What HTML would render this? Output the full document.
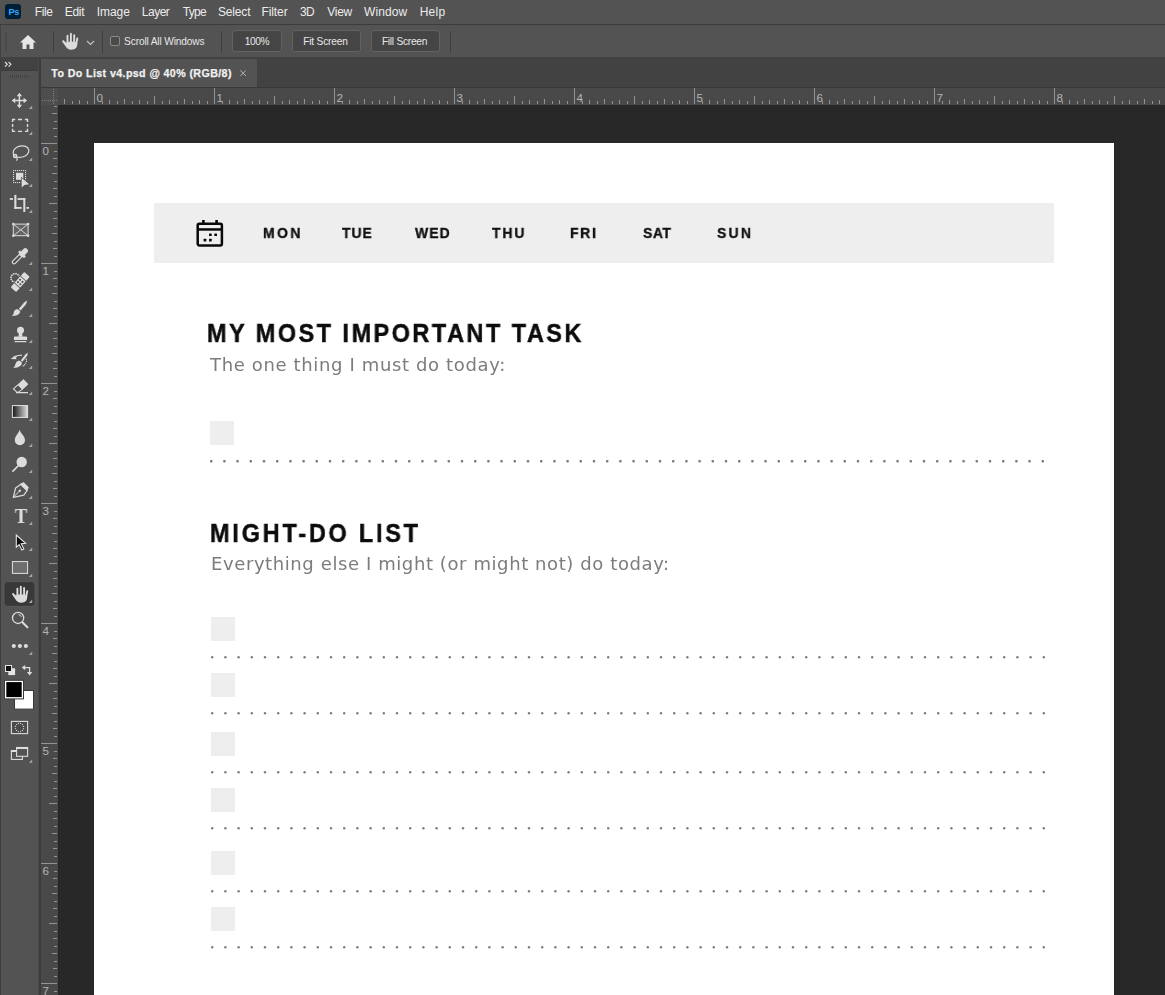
<!DOCTYPE html>
<html><head><meta charset="utf-8"><title>To Do List v4.psd</title>
<style>
html,body{margin:0;padding:0;}
body{width:1165px;height:995px;overflow:hidden;background:#282828;position:relative;font-family:"Liberation Sans",sans-serif;color:#e6e6e6;}
.abs{position:absolute;}
#menubar{left:0;top:0;width:1165px;height:24px;background:#535353;}
#menuline{left:0;top:24px;width:1165px;height:1px;background:#3c3c3c;}
#optbar{left:0;top:25px;width:1165px;height:33px;background:#535353;}
#optline{left:0;top:57px;width:1165px;height:2px;background:#424242;}
.menu{position:absolute;top:4px;font-size:13.3px;line-height:16px;color:#ececec;white-space:nowrap;}
#tabstrip{left:39px;top:59px;width:1126px;height:29px;background:#424242;}
#tab{left:41px;top:59px;width:216px;height:28px;background:#535353;}
#tabtxt{left:51px;top:66px;font-size:11.6px;font-weight:bold;line-height:14px;color:#f0f0f0;white-space:nowrap;}
#tabx{left:237px;top:66px;font-size:13px;line-height:14px;color:#c8c8c8;}
#toolbar{left:0;top:59px;width:38px;height:936px;background:#535353;}
#toolhead{left:0;top:59px;width:38px;height:11px;background:#424242;}
#toolgap{left:38px;top:59px;width:3px;height:936px;background:#3b3b3b;border-left:1px solid #4b4b4b;box-sizing:border-box;}
#hruler{left:41px;top:88px;width:1124px;height:17px;background:#494949;}
#vruler{left:41px;top:105px;width:17px;height:890px;background:#494949;}
#canvas{left:58px;top:105px;width:1107px;height:890px;background:#282828;}
#doc{left:94px;top:143px;width:1020px;height:852px;background:#fff;}
#band{left:154px;top:203px;width:900px;height:60px;background:#eeeeee;}
.day{position:absolute;top:224px;font-size:15.6px;font-weight:bold;line-height:18px;color:#111;letter-spacing:1px;white-space:nowrap;}
.h1{position:absolute;font-weight:bold;color:#0c0c0c;white-space:nowrap;font-size:25.5px;line-height:30px;letter-spacing:1px;}
.sub{position:absolute;color:#757575;white-space:nowrap;font-size:19px;line-height:24px;}
.cb{position:absolute;width:24px;height:24px;background:#eeeeee;}
.rnum{position:absolute;font-size:11.6px;line-height:12px;color:#b4b4b4;}
.btn{position:absolute;top:30px;height:20px;border:1px solid #626262;border-radius:3px;background:#454545;font-size:11.5px;line-height:20px;text-align:center;color:#e8e8e8;}
.sep{position:absolute;top:31px;width:1px;height:22px;background:#3e3e3e;}
</style></head><body>

<div class="abs" id="menubar"></div><div class="abs" id="menuline"></div>
<div class="abs" style="left:5px;top:4px;width:16px;height:15px;background:#001e36;border-radius:3px;"></div>
<div class="abs" style="left:8.5px;top:5.7px;font-size:9.2px;line-height:12px;font-weight:bold;color:#31a8ff;letter-spacing:-0.4px;">Ps</div>
<div class="abs" style="left:34.70px;top:2.70px;font-family:'Liberation Sans',sans-serif;font-size:12px;font-weight:normal;line-height:19px;letter-spacing:-0.333px;color:#ececec;white-space:nowrap;">File</div>
<div class="abs" style="left:64.70px;top:2.70px;font-family:'Liberation Sans',sans-serif;font-size:12px;font-weight:normal;line-height:19px;letter-spacing:-0.300px;color:#ececec;white-space:nowrap;">Edit</div>
<div class="abs" style="left:96.80px;top:2.70px;font-family:'Liberation Sans',sans-serif;font-size:12px;font-weight:normal;line-height:19px;letter-spacing:-0.075px;color:#ececec;white-space:nowrap;">Image</div>
<div class="abs" style="left:141.80px;top:2.70px;font-family:'Liberation Sans',sans-serif;font-size:12px;font-weight:normal;line-height:19px;letter-spacing:-0.500px;color:#ececec;white-space:nowrap;">Layer</div>
<div class="abs" style="left:182.80px;top:2.70px;font-family:'Liberation Sans',sans-serif;font-size:12px;font-weight:normal;line-height:19px;letter-spacing:-0.733px;color:#ececec;white-space:nowrap;">Type</div>
<div class="abs" style="left:217.90px;top:2.70px;font-family:'Liberation Sans',sans-serif;font-size:12px;font-weight:normal;line-height:19px;letter-spacing:-0.140px;color:#ececec;white-space:nowrap;">Select</div>
<div class="abs" style="left:261.50px;top:2.70px;font-family:'Liberation Sans',sans-serif;font-size:12px;font-weight:normal;line-height:19px;letter-spacing:-0.100px;color:#ececec;white-space:nowrap;">Filter</div>
<div class="abs" style="left:299.90px;top:2.70px;font-family:'Liberation Sans',sans-serif;font-size:12px;font-weight:normal;line-height:19px;letter-spacing:-0.500px;color:#ececec;white-space:nowrap;">3D</div>
<div class="abs" style="left:327.30px;top:2.70px;font-family:'Liberation Sans',sans-serif;font-size:12px;font-weight:normal;line-height:19px;letter-spacing:-0.300px;color:#ececec;white-space:nowrap;">View</div>
<div class="abs" style="left:364.10px;top:2.70px;font-family:'Liberation Sans',sans-serif;font-size:12px;font-weight:normal;line-height:19px;letter-spacing:0.080px;color:#ececec;white-space:nowrap;">Window</div>
<div class="abs" style="left:419.70px;top:2.70px;font-family:'Liberation Sans',sans-serif;font-size:12px;font-weight:normal;line-height:19px;letter-spacing:0.233px;color:#ececec;white-space:nowrap;">Help</div>
<div class="abs" id="optbar"></div><div class="abs" id="optline"></div>
<svg class="abs" style="left:5px;top:32px" width="3" height="22"><g fill="#444"><rect x="0" y="0" width="2" height="1"/><rect x="0" y="2" width="2" height="1"/><rect x="0" y="4" width="2" height="1"/><rect x="0" y="6" width="2" height="1"/><rect x="0" y="8" width="2" height="1"/><rect x="0" y="10" width="2" height="1"/><rect x="0" y="12" width="2" height="1"/><rect x="0" y="14" width="2" height="1"/><rect x="0" y="16" width="2" height="1"/><rect x="0" y="18" width="2" height="1"/></g></svg>
<div class="abs" style="left:0;top:25px;width:1px;height:32px;background:#424242;"></div>
<svg class="abs" style="left:19px;top:33.8px" width="18" height="16" viewBox="0 0 18 16"><path d="M9 1 L1 8.5 H3.5 V15 H7.5 V10.5 H10.5 V15 H14.5 V8.5 H17 Z" fill="#e6e6e6"/></svg>
<div class="sep" style="left:53px"></div>
<svg class="abs" style="left:60px;top:31px" width="22" height="22" viewBox="0 0 22 22"><g transform="translate(2 1.8)"><g fill="none" stroke="#dcdcdc" stroke-width="1.9" stroke-linecap="round"><path d="M5.5 2.9 V10 M8.9 1 V10 M12.2 2.3 V10 M15.3 5.6 L14.2 11.5"/></g><path d="M4.55 8.9 H13.2 L15.3 10.8 C15.5 14.6 13.6 17 9.4 17 C6.4 17 4.9 15.6 3.5 13.5 L0.3 8.9 C-0.3 7.9 0.9 6.9 1.9 7.7 L4.55 10.4 Z" fill="#dcdcdc"/></g></svg>
<svg class="abs" style="left:86px;top:39.8px" width="9" height="6" viewBox="0 0 9 6"><path d="M1 1 L4.5 4.5 L8 1" fill="none" stroke="#c0c0c0" stroke-width="1.2"/></svg>
<div class="sep" style="left:102px"></div>
<div class="abs" style="left:110px;top:36.4px;width:7.6px;height:7.6px;border:1px solid #8a8a8a;border-radius:2px;background:#4a4a4a;"></div>
<div class="abs" style="left:124.10px;top:33.90px;font-family:'Liberation Sans',sans-serif;font-size:10.2px;font-weight:normal;line-height:16px;letter-spacing:-0.159px;color:#e6e6e6;white-space:nowrap;">Scroll All Windows</div>
<div class="sep" style="left:221px"></div>
<div class="btn" style="left:232px;width:48px;"></div>
<div class="btn" style="left:292px;width:67px;"></div>
<div class="btn" style="left:371px;width:67px;"></div>
<div class="abs" style="left:244.80px;top:33.90px;font-family:'Liberation Sans',sans-serif;font-size:10.2px;font-weight:normal;line-height:16px;letter-spacing:-0.467px;color:#e8e8e8;white-space:nowrap;">100%</div>
<div class="abs" style="left:303.20px;top:33.90px;font-family:'Liberation Sans',sans-serif;font-size:10.2px;font-weight:normal;line-height:16px;letter-spacing:-0.200px;color:#e8e8e8;white-space:nowrap;">Fit Screen</div>
<div class="abs" style="left:381.90px;top:33.90px;font-family:'Liberation Sans',sans-serif;font-size:10.2px;font-weight:normal;line-height:16px;letter-spacing:-0.260px;color:#e8e8e8;white-space:nowrap;">Fill Screen</div>
<div class="sep" style="left:450px"></div>
<div class="abs" id="tabstrip"></div><div class="abs" id="tab"></div>
<div class="abs" style="left:51.30px;top:64.90px;font-family:'Liberation Sans',sans-serif;font-size:10.7px;font-weight:bold;line-height:17px;-webkit-text-stroke:0.25px #f0f0f0;letter-spacing:0.380px;color:#f0f0f0;white-space:nowrap;">To Do List v4.psd @ 40% (RGB/8)</div>
<svg class="abs" style="left:239.8px;top:70.2px" width="6.4" height="6.4" viewBox="0 0 6.4 6.4"><path d="M0.4 0.4 L6 6 M6 0.4 L0.4 6" stroke="#b8b8b8" stroke-width="0.95"/></svg>
<div class="abs" style="left:41px;top:87px;width:1124px;height:1px;background:#383838;"></div>
<div class="abs" id="canvas"></div>
<div class="abs" id="hruler"></div><div class="abs" id="vruler"></div>
<svg class="abs" style="left:41px;top:88px" width="1124" height="17"><g fill="#939393"><rect x="23" y="11" width="1" height="5"/><rect x="31" y="13" width="1" height="3"/><rect x="38" y="12" width="1" height="4"/><rect x="46" y="13" width="1" height="3"/><rect x="53" y="0" width="1" height="16"/><rect x="61" y="13" width="1" height="3"/><rect x="68" y="12" width="1" height="4"/><rect x="76" y="13" width="1" height="3"/><rect x="83" y="11" width="1" height="5"/><rect x="91" y="13" width="1" height="3"/><rect x="98" y="12" width="1" height="4"/><rect x="106" y="13" width="1" height="3"/><rect x="113" y="8" width="1" height="8"/><rect x="121" y="13" width="1" height="3"/><rect x="128" y="12" width="1" height="4"/><rect x="136" y="13" width="1" height="3"/><rect x="143" y="11" width="1" height="5"/><rect x="151" y="13" width="1" height="3"/><rect x="158" y="12" width="1" height="4"/><rect x="166" y="13" width="1" height="3"/><rect x="173" y="0" width="1" height="16"/><rect x="181" y="13" width="1" height="3"/><rect x="188" y="12" width="1" height="4"/><rect x="196" y="13" width="1" height="3"/><rect x="203" y="11" width="1" height="5"/><rect x="211" y="13" width="1" height="3"/><rect x="218" y="12" width="1" height="4"/><rect x="226" y="13" width="1" height="3"/><rect x="233" y="8" width="1" height="8"/><rect x="241" y="13" width="1" height="3"/><rect x="248" y="12" width="1" height="4"/><rect x="256" y="13" width="1" height="3"/><rect x="263" y="11" width="1" height="5"/><rect x="271" y="13" width="1" height="3"/><rect x="278" y="12" width="1" height="4"/><rect x="286" y="13" width="1" height="3"/><rect x="293" y="0" width="1" height="16"/><rect x="301" y="13" width="1" height="3"/><rect x="308" y="12" width="1" height="4"/><rect x="316" y="13" width="1" height="3"/><rect x="323" y="11" width="1" height="5"/><rect x="331" y="13" width="1" height="3"/><rect x="338" y="12" width="1" height="4"/><rect x="346" y="13" width="1" height="3"/><rect x="353" y="8" width="1" height="8"/><rect x="361" y="13" width="1" height="3"/><rect x="368" y="12" width="1" height="4"/><rect x="376" y="13" width="1" height="3"/><rect x="383" y="11" width="1" height="5"/><rect x="391" y="13" width="1" height="3"/><rect x="398" y="12" width="1" height="4"/><rect x="406" y="13" width="1" height="3"/><rect x="413" y="0" width="1" height="16"/><rect x="421" y="13" width="1" height="3"/><rect x="428" y="12" width="1" height="4"/><rect x="436" y="13" width="1" height="3"/><rect x="443" y="11" width="1" height="5"/><rect x="451" y="13" width="1" height="3"/><rect x="458" y="12" width="1" height="4"/><rect x="466" y="13" width="1" height="3"/><rect x="473" y="8" width="1" height="8"/><rect x="481" y="13" width="1" height="3"/><rect x="488" y="12" width="1" height="4"/><rect x="496" y="13" width="1" height="3"/><rect x="503" y="11" width="1" height="5"/><rect x="511" y="13" width="1" height="3"/><rect x="518" y="12" width="1" height="4"/><rect x="526" y="13" width="1" height="3"/><rect x="533" y="0" width="1" height="16"/><rect x="541" y="13" width="1" height="3"/><rect x="548" y="12" width="1" height="4"/><rect x="556" y="13" width="1" height="3"/><rect x="563" y="11" width="1" height="5"/><rect x="571" y="13" width="1" height="3"/><rect x="578" y="12" width="1" height="4"/><rect x="586" y="13" width="1" height="3"/><rect x="593" y="8" width="1" height="8"/><rect x="601" y="13" width="1" height="3"/><rect x="608" y="12" width="1" height="4"/><rect x="616" y="13" width="1" height="3"/><rect x="623" y="11" width="1" height="5"/><rect x="631" y="13" width="1" height="3"/><rect x="638" y="12" width="1" height="4"/><rect x="646" y="13" width="1" height="3"/><rect x="653" y="0" width="1" height="16"/><rect x="661" y="13" width="1" height="3"/><rect x="668" y="12" width="1" height="4"/><rect x="676" y="13" width="1" height="3"/><rect x="683" y="11" width="1" height="5"/><rect x="691" y="13" width="1" height="3"/><rect x="698" y="12" width="1" height="4"/><rect x="706" y="13" width="1" height="3"/><rect x="713" y="8" width="1" height="8"/><rect x="721" y="13" width="1" height="3"/><rect x="728" y="12" width="1" height="4"/><rect x="736" y="13" width="1" height="3"/><rect x="743" y="11" width="1" height="5"/><rect x="751" y="13" width="1" height="3"/><rect x="758" y="12" width="1" height="4"/><rect x="766" y="13" width="1" height="3"/><rect x="773" y="0" width="1" height="16"/><rect x="781" y="13" width="1" height="3"/><rect x="788" y="12" width="1" height="4"/><rect x="796" y="13" width="1" height="3"/><rect x="803" y="11" width="1" height="5"/><rect x="811" y="13" width="1" height="3"/><rect x="818" y="12" width="1" height="4"/><rect x="826" y="13" width="1" height="3"/><rect x="833" y="8" width="1" height="8"/><rect x="841" y="13" width="1" height="3"/><rect x="848" y="12" width="1" height="4"/><rect x="856" y="13" width="1" height="3"/><rect x="863" y="11" width="1" height="5"/><rect x="871" y="13" width="1" height="3"/><rect x="878" y="12" width="1" height="4"/><rect x="886" y="13" width="1" height="3"/><rect x="893" y="0" width="1" height="16"/><rect x="901" y="13" width="1" height="3"/><rect x="908" y="12" width="1" height="4"/><rect x="916" y="13" width="1" height="3"/><rect x="923" y="11" width="1" height="5"/><rect x="931" y="13" width="1" height="3"/><rect x="938" y="12" width="1" height="4"/><rect x="946" y="13" width="1" height="3"/><rect x="953" y="8" width="1" height="8"/><rect x="961" y="13" width="1" height="3"/><rect x="968" y="12" width="1" height="4"/><rect x="976" y="13" width="1" height="3"/><rect x="983" y="11" width="1" height="5"/><rect x="991" y="13" width="1" height="3"/><rect x="998" y="12" width="1" height="4"/><rect x="1006" y="13" width="1" height="3"/><rect x="1013" y="0" width="1" height="16"/><rect x="1021" y="13" width="1" height="3"/><rect x="1028" y="12" width="1" height="4"/><rect x="1036" y="13" width="1" height="3"/><rect x="1043" y="11" width="1" height="5"/><rect x="1051" y="13" width="1" height="3"/><rect x="1058" y="12" width="1" height="4"/><rect x="1066" y="13" width="1" height="3"/><rect x="1073" y="8" width="1" height="8"/><rect x="1081" y="13" width="1" height="3"/><rect x="1088" y="12" width="1" height="4"/><rect x="1096" y="13" width="1" height="3"/><rect x="1103" y="11" width="1" height="5"/><rect x="1111" y="13" width="1" height="3"/><rect x="1118" y="12" width="1" height="4"/></g></svg>
<div class="rnum" style="left:96.4px;top:91.8px">0</div>
<div class="rnum" style="left:216.4px;top:91.8px">1</div>
<div class="rnum" style="left:336.4px;top:91.8px">2</div>
<div class="rnum" style="left:456.4px;top:91.8px">3</div>
<div class="rnum" style="left:576.4px;top:91.8px">4</div>
<div class="rnum" style="left:696.4px;top:91.8px">5</div>
<div class="rnum" style="left:816.4px;top:91.8px">6</div>
<div class="rnum" style="left:936.4px;top:91.8px">7</div>
<div class="rnum" style="left:1056.4px;top:91.8px">8</div>
<svg class="abs" style="left:41px;top:105px" width="17" height="890"><g fill="#939393"><rect x="13" y="1" width="3" height="1"/><rect x="11" y="8" width="5" height="1"/><rect x="13" y="16" width="3" height="1"/><rect x="12" y="23" width="4" height="1"/><rect x="13" y="31" width="3" height="1"/><rect x="0" y="38" width="16" height="1"/><rect x="13" y="46" width="3" height="1"/><rect x="12" y="53" width="4" height="1"/><rect x="13" y="61" width="3" height="1"/><rect x="11" y="68" width="5" height="1"/><rect x="13" y="76" width="3" height="1"/><rect x="12" y="83" width="4" height="1"/><rect x="13" y="91" width="3" height="1"/><rect x="8" y="98" width="8" height="1"/><rect x="13" y="106" width="3" height="1"/><rect x="12" y="113" width="4" height="1"/><rect x="13" y="121" width="3" height="1"/><rect x="11" y="128" width="5" height="1"/><rect x="13" y="136" width="3" height="1"/><rect x="12" y="143" width="4" height="1"/><rect x="13" y="151" width="3" height="1"/><rect x="0" y="158" width="16" height="1"/><rect x="13" y="166" width="3" height="1"/><rect x="12" y="173" width="4" height="1"/><rect x="13" y="181" width="3" height="1"/><rect x="11" y="188" width="5" height="1"/><rect x="13" y="196" width="3" height="1"/><rect x="12" y="203" width="4" height="1"/><rect x="13" y="211" width="3" height="1"/><rect x="8" y="218" width="8" height="1"/><rect x="13" y="226" width="3" height="1"/><rect x="12" y="233" width="4" height="1"/><rect x="13" y="241" width="3" height="1"/><rect x="11" y="248" width="5" height="1"/><rect x="13" y="256" width="3" height="1"/><rect x="12" y="263" width="4" height="1"/><rect x="13" y="271" width="3" height="1"/><rect x="0" y="278" width="16" height="1"/><rect x="13" y="286" width="3" height="1"/><rect x="12" y="293" width="4" height="1"/><rect x="13" y="301" width="3" height="1"/><rect x="11" y="308" width="5" height="1"/><rect x="13" y="316" width="3" height="1"/><rect x="12" y="323" width="4" height="1"/><rect x="13" y="331" width="3" height="1"/><rect x="8" y="338" width="8" height="1"/><rect x="13" y="346" width="3" height="1"/><rect x="12" y="353" width="4" height="1"/><rect x="13" y="361" width="3" height="1"/><rect x="11" y="368" width="5" height="1"/><rect x="13" y="376" width="3" height="1"/><rect x="12" y="383" width="4" height="1"/><rect x="13" y="391" width="3" height="1"/><rect x="0" y="398" width="16" height="1"/><rect x="13" y="406" width="3" height="1"/><rect x="12" y="413" width="4" height="1"/><rect x="13" y="421" width="3" height="1"/><rect x="11" y="428" width="5" height="1"/><rect x="13" y="436" width="3" height="1"/><rect x="12" y="443" width="4" height="1"/><rect x="13" y="451" width="3" height="1"/><rect x="8" y="458" width="8" height="1"/><rect x="13" y="466" width="3" height="1"/><rect x="12" y="473" width="4" height="1"/><rect x="13" y="481" width="3" height="1"/><rect x="11" y="488" width="5" height="1"/><rect x="13" y="496" width="3" height="1"/><rect x="12" y="503" width="4" height="1"/><rect x="13" y="511" width="3" height="1"/><rect x="0" y="518" width="16" height="1"/><rect x="13" y="526" width="3" height="1"/><rect x="12" y="533" width="4" height="1"/><rect x="13" y="541" width="3" height="1"/><rect x="11" y="548" width="5" height="1"/><rect x="13" y="556" width="3" height="1"/><rect x="12" y="563" width="4" height="1"/><rect x="13" y="571" width="3" height="1"/><rect x="8" y="578" width="8" height="1"/><rect x="13" y="586" width="3" height="1"/><rect x="12" y="593" width="4" height="1"/><rect x="13" y="601" width="3" height="1"/><rect x="11" y="608" width="5" height="1"/><rect x="13" y="616" width="3" height="1"/><rect x="12" y="623" width="4" height="1"/><rect x="13" y="631" width="3" height="1"/><rect x="0" y="638" width="16" height="1"/><rect x="13" y="646" width="3" height="1"/><rect x="12" y="653" width="4" height="1"/><rect x="13" y="661" width="3" height="1"/><rect x="11" y="668" width="5" height="1"/><rect x="13" y="676" width="3" height="1"/><rect x="12" y="683" width="4" height="1"/><rect x="13" y="691" width="3" height="1"/><rect x="8" y="698" width="8" height="1"/><rect x="13" y="706" width="3" height="1"/><rect x="12" y="713" width="4" height="1"/><rect x="13" y="721" width="3" height="1"/><rect x="11" y="728" width="5" height="1"/><rect x="13" y="736" width="3" height="1"/><rect x="12" y="743" width="4" height="1"/><rect x="13" y="751" width="3" height="1"/><rect x="0" y="758" width="16" height="1"/><rect x="13" y="766" width="3" height="1"/><rect x="12" y="773" width="4" height="1"/><rect x="13" y="781" width="3" height="1"/><rect x="11" y="788" width="5" height="1"/><rect x="13" y="796" width="3" height="1"/><rect x="12" y="803" width="4" height="1"/><rect x="13" y="811" width="3" height="1"/><rect x="8" y="818" width="8" height="1"/><rect x="13" y="826" width="3" height="1"/><rect x="12" y="833" width="4" height="1"/><rect x="13" y="841" width="3" height="1"/><rect x="11" y="848" width="5" height="1"/><rect x="13" y="856" width="3" height="1"/><rect x="12" y="863" width="4" height="1"/><rect x="13" y="871" width="3" height="1"/><rect x="0" y="878" width="16" height="1"/><rect x="13" y="886" width="3" height="1"/></g></svg>
<div class="rnum" style="left:42.4px;top:145.4px">0</div>
<div class="rnum" style="left:42.4px;top:265.4px">1</div>
<div class="rnum" style="left:42.4px;top:385.4px">2</div>
<div class="rnum" style="left:42.4px;top:505.4px">3</div>
<div class="rnum" style="left:42.4px;top:625.4px">4</div>
<div class="rnum" style="left:42.4px;top:745.4px">5</div>
<div class="rnum" style="left:42.4px;top:865.4px">6</div>
<div class="rnum" style="left:42.4px;top:985.4px">7</div>
<div class="abs" style="left:41px;top:88px;width:17px;height:17px;background:#4e4e4e;"></div>
<svg class="abs" style="left:41px;top:88px" width="17" height="17"><g fill="#7c7c7c"><rect x="1" y="12" width="1" height="1"/><rect x="3" y="12" width="1" height="1"/><rect x="5" y="12" width="1" height="1"/><rect x="7" y="12" width="1" height="1"/><rect x="9" y="12" width="1" height="1"/><rect x="11" y="12" width="1" height="1"/><rect x="13" y="12" width="1" height="1"/><rect x="15" y="12" width="1" height="1"/><rect x="12" y="1" width="1" height="1"/><rect x="12" y="3" width="1" height="1"/><rect x="12" y="5" width="1" height="1"/><rect x="12" y="7" width="1" height="1"/><rect x="12" y="9" width="1" height="1"/><rect x="12" y="11" width="1" height="1"/><rect x="12" y="13" width="1" height="1"/><rect x="12" y="15" width="1" height="1"/></g></svg>
<div class="abs" id="doc"></div><div class="abs" id="band"></div>
<svg class="abs" style="left:195px;top:219px" width="30" height="29" viewBox="0 0 30 29">
<rect x="2.7" y="4.8" width="24.2" height="21.6" rx="1.6" fill="none" stroke="#0a0a0a" stroke-width="2.5"/>
<rect x="2.6" y="9.2" width="24.4" height="2.5" fill="#0a0a0a"/>
<rect x="7.1" y="1" width="2.6" height="4" fill="#0a0a0a"/><rect x="20.3" y="1" width="2.6" height="4" fill="#0a0a0a"/>
<rect x="14" y="14.4" width="2.7" height="2.7" rx="0.5" fill="#0a0a0a"/><rect x="19.3" y="14.4" width="2.7" height="2.7" rx="0.5" fill="#0a0a0a"/>
<rect x="8.6" y="19.7" width="2.7" height="2.7" rx="0.5" fill="#0a0a0a"/><rect x="14" y="19.7" width="2.7" height="2.7" rx="0.5" fill="#0a0a0a"/>
</svg>
<div class="abs" style="left:263.38px;top:221.30px;font-family:'Liberation Sans',sans-serif;font-size:15.2px;font-weight:bold;line-height:24px;-webkit-text-stroke:0.35px #111;letter-spacing:2.620px;color:#111;white-space:nowrap;transform:scaleX(0.92);transform-origin:0 0;will-change:transform;">MON</div>
<div class="abs" style="left:342.40px;top:221.30px;font-family:'Liberation Sans',sans-serif;font-size:15.2px;font-weight:bold;line-height:24px;-webkit-text-stroke:0.35px #111;letter-spacing:1.033px;color:#111;white-space:nowrap;transform:scaleX(0.92);transform-origin:0 0;will-change:transform;">TUE</div>
<div class="abs" style="left:415.20px;top:221.30px;font-family:'Liberation Sans',sans-serif;font-size:15.2px;font-weight:bold;line-height:24px;-webkit-text-stroke:0.35px #111;letter-spacing:1.196px;color:#111;white-space:nowrap;transform:scaleX(0.92);transform-origin:0 0;will-change:transform;">WED</div>
<div class="abs" style="left:492.40px;top:221.30px;font-family:'Liberation Sans',sans-serif;font-size:15.2px;font-weight:bold;line-height:24px;-webkit-text-stroke:0.35px #111;letter-spacing:2.011px;color:#111;white-space:nowrap;transform:scaleX(0.92);transform-origin:0 0;will-change:transform;">THU</div>
<div class="abs" style="left:569.58px;top:221.30px;font-family:'Liberation Sans',sans-serif;font-size:15.2px;font-weight:bold;line-height:24px;-webkit-text-stroke:0.35px #111;letter-spacing:1.815px;color:#111;white-space:nowrap;transform:scaleX(0.92);transform-origin:0 0;will-change:transform;">FRI</div>
<div class="abs" style="left:643.28px;top:221.30px;font-family:'Liberation Sans',sans-serif;font-size:15.2px;font-weight:bold;line-height:24px;-webkit-text-stroke:0.35px #111;letter-spacing:0.565px;color:#111;white-space:nowrap;transform:scaleX(0.92);transform-origin:0 0;will-change:transform;">SAT</div>
<div class="abs" style="left:716.98px;top:221.30px;font-family:'Liberation Sans',sans-serif;font-size:15.2px;font-weight:bold;line-height:24px;-webkit-text-stroke:0.35px #111;letter-spacing:2.446px;color:#111;white-space:nowrap;transform:scaleX(0.92);transform-origin:0 0;will-change:transform;">SUN</div>
<div class="abs" style="left:207.46px;top:313.00px;font-family:'Liberation Sans',sans-serif;font-size:25.5px;font-weight:bold;line-height:40px;-webkit-text-stroke:0.45px #0c0c0c;letter-spacing:2.715px;color:#0c0c0c;white-space:nowrap;transform:scaleX(0.92);transform-origin:0 0;will-change:transform;">MY MOST IMPORTANT TASK</div>
<div class="abs" style="left:210.30px;top:351.00px;font-family:'DejaVu Sans','Liberation Sans',sans-serif;font-size:18px;font-weight:normal;line-height:28px;letter-spacing:0.641px;color:#7c7c7c;white-space:nowrap;will-change:transform;">The one thing I must do today:</div>
<div class="abs" style="left:209.76px;top:513.20px;font-family:'Liberation Sans',sans-serif;font-size:25.5px;font-weight:bold;line-height:40px;-webkit-text-stroke:0.45px #0c0c0c;letter-spacing:3.029px;color:#0c0c0c;white-space:nowrap;transform:scaleX(0.92);transform-origin:0 0;will-change:transform;">MIGHT-DO LIST</div>
<div class="abs" style="left:210.90px;top:550.00px;font-family:'DejaVu Sans','Liberation Sans',sans-serif;font-size:18px;font-weight:normal;line-height:28px;letter-spacing:0.594px;color:#7c7c7c;white-space:nowrap;will-change:transform;">Everything else I might (or might not) do today:</div>
<div class="cb" style="left:210px;top:421px"></div>
<svg class="abs" style="left:210.2px;top:459.8px" width="836" height="3"><g fill="#7c7c7c"><rect x="0.0" y="0" width="2.4" height="2.4" rx="0.6"/><rect x="13.2" y="0" width="2.4" height="2.4" rx="0.6"/><rect x="26.4" y="0" width="2.4" height="2.4" rx="0.6"/><rect x="39.6" y="0" width="2.4" height="2.4" rx="0.6"/><rect x="52.8" y="0" width="2.4" height="2.4" rx="0.6"/><rect x="66.0" y="0" width="2.4" height="2.4" rx="0.6"/><rect x="79.2" y="0" width="2.4" height="2.4" rx="0.6"/><rect x="92.4" y="0" width="2.4" height="2.4" rx="0.6"/><rect x="105.6" y="0" width="2.4" height="2.4" rx="0.6"/><rect x="118.8" y="0" width="2.4" height="2.4" rx="0.6"/><rect x="132.0" y="0" width="2.4" height="2.4" rx="0.6"/><rect x="145.2" y="0" width="2.4" height="2.4" rx="0.6"/><rect x="158.4" y="0" width="2.4" height="2.4" rx="0.6"/><rect x="171.6" y="0" width="2.4" height="2.4" rx="0.6"/><rect x="184.8" y="0" width="2.4" height="2.4" rx="0.6"/><rect x="198.0" y="0" width="2.4" height="2.4" rx="0.6"/><rect x="211.2" y="0" width="2.4" height="2.4" rx="0.6"/><rect x="224.4" y="0" width="2.4" height="2.4" rx="0.6"/><rect x="237.6" y="0" width="2.4" height="2.4" rx="0.6"/><rect x="250.8" y="0" width="2.4" height="2.4" rx="0.6"/><rect x="264.0" y="0" width="2.4" height="2.4" rx="0.6"/><rect x="277.2" y="0" width="2.4" height="2.4" rx="0.6"/><rect x="290.4" y="0" width="2.4" height="2.4" rx="0.6"/><rect x="303.6" y="0" width="2.4" height="2.4" rx="0.6"/><rect x="316.8" y="0" width="2.4" height="2.4" rx="0.6"/><rect x="330.0" y="0" width="2.4" height="2.4" rx="0.6"/><rect x="343.2" y="0" width="2.4" height="2.4" rx="0.6"/><rect x="356.4" y="0" width="2.4" height="2.4" rx="0.6"/><rect x="369.6" y="0" width="2.4" height="2.4" rx="0.6"/><rect x="382.8" y="0" width="2.4" height="2.4" rx="0.6"/><rect x="396.0" y="0" width="2.4" height="2.4" rx="0.6"/><rect x="409.2" y="0" width="2.4" height="2.4" rx="0.6"/><rect x="422.4" y="0" width="2.4" height="2.4" rx="0.6"/><rect x="435.6" y="0" width="2.4" height="2.4" rx="0.6"/><rect x="448.8" y="0" width="2.4" height="2.4" rx="0.6"/><rect x="462.0" y="0" width="2.4" height="2.4" rx="0.6"/><rect x="475.2" y="0" width="2.4" height="2.4" rx="0.6"/><rect x="488.4" y="0" width="2.4" height="2.4" rx="0.6"/><rect x="501.6" y="0" width="2.4" height="2.4" rx="0.6"/><rect x="514.8" y="0" width="2.4" height="2.4" rx="0.6"/><rect x="528.0" y="0" width="2.4" height="2.4" rx="0.6"/><rect x="541.2" y="0" width="2.4" height="2.4" rx="0.6"/><rect x="554.4" y="0" width="2.4" height="2.4" rx="0.6"/><rect x="567.6" y="0" width="2.4" height="2.4" rx="0.6"/><rect x="580.8" y="0" width="2.4" height="2.4" rx="0.6"/><rect x="594.0" y="0" width="2.4" height="2.4" rx="0.6"/><rect x="607.2" y="0" width="2.4" height="2.4" rx="0.6"/><rect x="620.4" y="0" width="2.4" height="2.4" rx="0.6"/><rect x="633.6" y="0" width="2.4" height="2.4" rx="0.6"/><rect x="646.8" y="0" width="2.4" height="2.4" rx="0.6"/><rect x="660.0" y="0" width="2.4" height="2.4" rx="0.6"/><rect x="673.2" y="0" width="2.4" height="2.4" rx="0.6"/><rect x="686.4" y="0" width="2.4" height="2.4" rx="0.6"/><rect x="699.6" y="0" width="2.4" height="2.4" rx="0.6"/><rect x="712.8" y="0" width="2.4" height="2.4" rx="0.6"/><rect x="726.0" y="0" width="2.4" height="2.4" rx="0.6"/><rect x="739.2" y="0" width="2.4" height="2.4" rx="0.6"/><rect x="752.4" y="0" width="2.4" height="2.4" rx="0.6"/><rect x="765.6" y="0" width="2.4" height="2.4" rx="0.6"/><rect x="778.8" y="0" width="2.4" height="2.4" rx="0.6"/><rect x="792.0" y="0" width="2.4" height="2.4" rx="0.6"/><rect x="805.2" y="0" width="2.4" height="2.4" rx="0.6"/><rect x="818.4" y="0" width="2.4" height="2.4" rx="0.6"/><rect x="831.6" y="0" width="2.4" height="2.4" rx="0.6"/></g></svg>
<div class="cb" style="left:211px;top:617px"></div>
<svg class="abs" style="left:211px;top:656.0999999999999px" width="836" height="3"><g fill="#7c7c7c"><rect x="0.0" y="0" width="2.4" height="2.4" rx="1.2"/><rect x="13.2" y="0" width="2.4" height="2.4" rx="1.2"/><rect x="26.4" y="0" width="2.4" height="2.4" rx="1.2"/><rect x="39.6" y="0" width="2.4" height="2.4" rx="1.2"/><rect x="52.8" y="0" width="2.4" height="2.4" rx="1.2"/><rect x="66.0" y="0" width="2.4" height="2.4" rx="1.2"/><rect x="79.2" y="0" width="2.4" height="2.4" rx="1.2"/><rect x="92.4" y="0" width="2.4" height="2.4" rx="1.2"/><rect x="105.6" y="0" width="2.4" height="2.4" rx="1.2"/><rect x="118.8" y="0" width="2.4" height="2.4" rx="1.2"/><rect x="132.0" y="0" width="2.4" height="2.4" rx="1.2"/><rect x="145.2" y="0" width="2.4" height="2.4" rx="1.2"/><rect x="158.4" y="0" width="2.4" height="2.4" rx="1.2"/><rect x="171.6" y="0" width="2.4" height="2.4" rx="1.2"/><rect x="184.8" y="0" width="2.4" height="2.4" rx="1.2"/><rect x="198.0" y="0" width="2.4" height="2.4" rx="1.2"/><rect x="211.2" y="0" width="2.4" height="2.4" rx="1.2"/><rect x="224.4" y="0" width="2.4" height="2.4" rx="1.2"/><rect x="237.6" y="0" width="2.4" height="2.4" rx="1.2"/><rect x="250.8" y="0" width="2.4" height="2.4" rx="1.2"/><rect x="264.0" y="0" width="2.4" height="2.4" rx="1.2"/><rect x="277.2" y="0" width="2.4" height="2.4" rx="1.2"/><rect x="290.4" y="0" width="2.4" height="2.4" rx="1.2"/><rect x="303.6" y="0" width="2.4" height="2.4" rx="1.2"/><rect x="316.8" y="0" width="2.4" height="2.4" rx="1.2"/><rect x="330.0" y="0" width="2.4" height="2.4" rx="1.2"/><rect x="343.2" y="0" width="2.4" height="2.4" rx="1.2"/><rect x="356.4" y="0" width="2.4" height="2.4" rx="1.2"/><rect x="369.6" y="0" width="2.4" height="2.4" rx="1.2"/><rect x="382.8" y="0" width="2.4" height="2.4" rx="1.2"/><rect x="396.0" y="0" width="2.4" height="2.4" rx="1.2"/><rect x="409.2" y="0" width="2.4" height="2.4" rx="1.2"/><rect x="422.4" y="0" width="2.4" height="2.4" rx="1.2"/><rect x="435.6" y="0" width="2.4" height="2.4" rx="1.2"/><rect x="448.8" y="0" width="2.4" height="2.4" rx="1.2"/><rect x="462.0" y="0" width="2.4" height="2.4" rx="1.2"/><rect x="475.2" y="0" width="2.4" height="2.4" rx="1.2"/><rect x="488.4" y="0" width="2.4" height="2.4" rx="1.2"/><rect x="501.6" y="0" width="2.4" height="2.4" rx="1.2"/><rect x="514.8" y="0" width="2.4" height="2.4" rx="1.2"/><rect x="528.0" y="0" width="2.4" height="2.4" rx="1.2"/><rect x="541.2" y="0" width="2.4" height="2.4" rx="1.2"/><rect x="554.4" y="0" width="2.4" height="2.4" rx="1.2"/><rect x="567.6" y="0" width="2.4" height="2.4" rx="1.2"/><rect x="580.8" y="0" width="2.4" height="2.4" rx="1.2"/><rect x="594.0" y="0" width="2.4" height="2.4" rx="1.2"/><rect x="607.2" y="0" width="2.4" height="2.4" rx="1.2"/><rect x="620.4" y="0" width="2.4" height="2.4" rx="1.2"/><rect x="633.6" y="0" width="2.4" height="2.4" rx="1.2"/><rect x="646.8" y="0" width="2.4" height="2.4" rx="1.2"/><rect x="660.0" y="0" width="2.4" height="2.4" rx="1.2"/><rect x="673.2" y="0" width="2.4" height="2.4" rx="1.2"/><rect x="686.4" y="0" width="2.4" height="2.4" rx="1.2"/><rect x="699.6" y="0" width="2.4" height="2.4" rx="1.2"/><rect x="712.8" y="0" width="2.4" height="2.4" rx="1.2"/><rect x="726.0" y="0" width="2.4" height="2.4" rx="1.2"/><rect x="739.2" y="0" width="2.4" height="2.4" rx="1.2"/><rect x="752.4" y="0" width="2.4" height="2.4" rx="1.2"/><rect x="765.6" y="0" width="2.4" height="2.4" rx="1.2"/><rect x="778.8" y="0" width="2.4" height="2.4" rx="1.2"/><rect x="792.0" y="0" width="2.4" height="2.4" rx="1.2"/><rect x="805.2" y="0" width="2.4" height="2.4" rx="1.2"/><rect x="818.4" y="0" width="2.4" height="2.4" rx="1.2"/><rect x="831.6" y="0" width="2.4" height="2.4" rx="1.2"/></g></svg>
<div class="cb" style="left:211px;top:672.5px"></div>
<svg class="abs" style="left:211px;top:711.5px" width="836" height="3"><g fill="#7c7c7c"><rect x="0.0" y="0" width="2.4" height="2.4" rx="1.2"/><rect x="13.2" y="0" width="2.4" height="2.4" rx="1.2"/><rect x="26.4" y="0" width="2.4" height="2.4" rx="1.2"/><rect x="39.6" y="0" width="2.4" height="2.4" rx="1.2"/><rect x="52.8" y="0" width="2.4" height="2.4" rx="1.2"/><rect x="66.0" y="0" width="2.4" height="2.4" rx="1.2"/><rect x="79.2" y="0" width="2.4" height="2.4" rx="1.2"/><rect x="92.4" y="0" width="2.4" height="2.4" rx="1.2"/><rect x="105.6" y="0" width="2.4" height="2.4" rx="1.2"/><rect x="118.8" y="0" width="2.4" height="2.4" rx="1.2"/><rect x="132.0" y="0" width="2.4" height="2.4" rx="1.2"/><rect x="145.2" y="0" width="2.4" height="2.4" rx="1.2"/><rect x="158.4" y="0" width="2.4" height="2.4" rx="1.2"/><rect x="171.6" y="0" width="2.4" height="2.4" rx="1.2"/><rect x="184.8" y="0" width="2.4" height="2.4" rx="1.2"/><rect x="198.0" y="0" width="2.4" height="2.4" rx="1.2"/><rect x="211.2" y="0" width="2.4" height="2.4" rx="1.2"/><rect x="224.4" y="0" width="2.4" height="2.4" rx="1.2"/><rect x="237.6" y="0" width="2.4" height="2.4" rx="1.2"/><rect x="250.8" y="0" width="2.4" height="2.4" rx="1.2"/><rect x="264.0" y="0" width="2.4" height="2.4" rx="1.2"/><rect x="277.2" y="0" width="2.4" height="2.4" rx="1.2"/><rect x="290.4" y="0" width="2.4" height="2.4" rx="1.2"/><rect x="303.6" y="0" width="2.4" height="2.4" rx="1.2"/><rect x="316.8" y="0" width="2.4" height="2.4" rx="1.2"/><rect x="330.0" y="0" width="2.4" height="2.4" rx="1.2"/><rect x="343.2" y="0" width="2.4" height="2.4" rx="1.2"/><rect x="356.4" y="0" width="2.4" height="2.4" rx="1.2"/><rect x="369.6" y="0" width="2.4" height="2.4" rx="1.2"/><rect x="382.8" y="0" width="2.4" height="2.4" rx="1.2"/><rect x="396.0" y="0" width="2.4" height="2.4" rx="1.2"/><rect x="409.2" y="0" width="2.4" height="2.4" rx="1.2"/><rect x="422.4" y="0" width="2.4" height="2.4" rx="1.2"/><rect x="435.6" y="0" width="2.4" height="2.4" rx="1.2"/><rect x="448.8" y="0" width="2.4" height="2.4" rx="1.2"/><rect x="462.0" y="0" width="2.4" height="2.4" rx="1.2"/><rect x="475.2" y="0" width="2.4" height="2.4" rx="1.2"/><rect x="488.4" y="0" width="2.4" height="2.4" rx="1.2"/><rect x="501.6" y="0" width="2.4" height="2.4" rx="1.2"/><rect x="514.8" y="0" width="2.4" height="2.4" rx="1.2"/><rect x="528.0" y="0" width="2.4" height="2.4" rx="1.2"/><rect x="541.2" y="0" width="2.4" height="2.4" rx="1.2"/><rect x="554.4" y="0" width="2.4" height="2.4" rx="1.2"/><rect x="567.6" y="0" width="2.4" height="2.4" rx="1.2"/><rect x="580.8" y="0" width="2.4" height="2.4" rx="1.2"/><rect x="594.0" y="0" width="2.4" height="2.4" rx="1.2"/><rect x="607.2" y="0" width="2.4" height="2.4" rx="1.2"/><rect x="620.4" y="0" width="2.4" height="2.4" rx="1.2"/><rect x="633.6" y="0" width="2.4" height="2.4" rx="1.2"/><rect x="646.8" y="0" width="2.4" height="2.4" rx="1.2"/><rect x="660.0" y="0" width="2.4" height="2.4" rx="1.2"/><rect x="673.2" y="0" width="2.4" height="2.4" rx="1.2"/><rect x="686.4" y="0" width="2.4" height="2.4" rx="1.2"/><rect x="699.6" y="0" width="2.4" height="2.4" rx="1.2"/><rect x="712.8" y="0" width="2.4" height="2.4" rx="1.2"/><rect x="726.0" y="0" width="2.4" height="2.4" rx="1.2"/><rect x="739.2" y="0" width="2.4" height="2.4" rx="1.2"/><rect x="752.4" y="0" width="2.4" height="2.4" rx="1.2"/><rect x="765.6" y="0" width="2.4" height="2.4" rx="1.2"/><rect x="778.8" y="0" width="2.4" height="2.4" rx="1.2"/><rect x="792.0" y="0" width="2.4" height="2.4" rx="1.2"/><rect x="805.2" y="0" width="2.4" height="2.4" rx="1.2"/><rect x="818.4" y="0" width="2.4" height="2.4" rx="1.2"/><rect x="831.6" y="0" width="2.4" height="2.4" rx="1.2"/></g></svg>
<div class="cb" style="left:211px;top:732px"></div>
<svg class="abs" style="left:211px;top:771.1999999999999px" width="836" height="3"><g fill="#7c7c7c"><rect x="0.0" y="0" width="2.4" height="2.4" rx="1.2"/><rect x="13.2" y="0" width="2.4" height="2.4" rx="1.2"/><rect x="26.4" y="0" width="2.4" height="2.4" rx="1.2"/><rect x="39.6" y="0" width="2.4" height="2.4" rx="1.2"/><rect x="52.8" y="0" width="2.4" height="2.4" rx="1.2"/><rect x="66.0" y="0" width="2.4" height="2.4" rx="1.2"/><rect x="79.2" y="0" width="2.4" height="2.4" rx="1.2"/><rect x="92.4" y="0" width="2.4" height="2.4" rx="1.2"/><rect x="105.6" y="0" width="2.4" height="2.4" rx="1.2"/><rect x="118.8" y="0" width="2.4" height="2.4" rx="1.2"/><rect x="132.0" y="0" width="2.4" height="2.4" rx="1.2"/><rect x="145.2" y="0" width="2.4" height="2.4" rx="1.2"/><rect x="158.4" y="0" width="2.4" height="2.4" rx="1.2"/><rect x="171.6" y="0" width="2.4" height="2.4" rx="1.2"/><rect x="184.8" y="0" width="2.4" height="2.4" rx="1.2"/><rect x="198.0" y="0" width="2.4" height="2.4" rx="1.2"/><rect x="211.2" y="0" width="2.4" height="2.4" rx="1.2"/><rect x="224.4" y="0" width="2.4" height="2.4" rx="1.2"/><rect x="237.6" y="0" width="2.4" height="2.4" rx="1.2"/><rect x="250.8" y="0" width="2.4" height="2.4" rx="1.2"/><rect x="264.0" y="0" width="2.4" height="2.4" rx="1.2"/><rect x="277.2" y="0" width="2.4" height="2.4" rx="1.2"/><rect x="290.4" y="0" width="2.4" height="2.4" rx="1.2"/><rect x="303.6" y="0" width="2.4" height="2.4" rx="1.2"/><rect x="316.8" y="0" width="2.4" height="2.4" rx="1.2"/><rect x="330.0" y="0" width="2.4" height="2.4" rx="1.2"/><rect x="343.2" y="0" width="2.4" height="2.4" rx="1.2"/><rect x="356.4" y="0" width="2.4" height="2.4" rx="1.2"/><rect x="369.6" y="0" width="2.4" height="2.4" rx="1.2"/><rect x="382.8" y="0" width="2.4" height="2.4" rx="1.2"/><rect x="396.0" y="0" width="2.4" height="2.4" rx="1.2"/><rect x="409.2" y="0" width="2.4" height="2.4" rx="1.2"/><rect x="422.4" y="0" width="2.4" height="2.4" rx="1.2"/><rect x="435.6" y="0" width="2.4" height="2.4" rx="1.2"/><rect x="448.8" y="0" width="2.4" height="2.4" rx="1.2"/><rect x="462.0" y="0" width="2.4" height="2.4" rx="1.2"/><rect x="475.2" y="0" width="2.4" height="2.4" rx="1.2"/><rect x="488.4" y="0" width="2.4" height="2.4" rx="1.2"/><rect x="501.6" y="0" width="2.4" height="2.4" rx="1.2"/><rect x="514.8" y="0" width="2.4" height="2.4" rx="1.2"/><rect x="528.0" y="0" width="2.4" height="2.4" rx="1.2"/><rect x="541.2" y="0" width="2.4" height="2.4" rx="1.2"/><rect x="554.4" y="0" width="2.4" height="2.4" rx="1.2"/><rect x="567.6" y="0" width="2.4" height="2.4" rx="1.2"/><rect x="580.8" y="0" width="2.4" height="2.4" rx="1.2"/><rect x="594.0" y="0" width="2.4" height="2.4" rx="1.2"/><rect x="607.2" y="0" width="2.4" height="2.4" rx="1.2"/><rect x="620.4" y="0" width="2.4" height="2.4" rx="1.2"/><rect x="633.6" y="0" width="2.4" height="2.4" rx="1.2"/><rect x="646.8" y="0" width="2.4" height="2.4" rx="1.2"/><rect x="660.0" y="0" width="2.4" height="2.4" rx="1.2"/><rect x="673.2" y="0" width="2.4" height="2.4" rx="1.2"/><rect x="686.4" y="0" width="2.4" height="2.4" rx="1.2"/><rect x="699.6" y="0" width="2.4" height="2.4" rx="1.2"/><rect x="712.8" y="0" width="2.4" height="2.4" rx="1.2"/><rect x="726.0" y="0" width="2.4" height="2.4" rx="1.2"/><rect x="739.2" y="0" width="2.4" height="2.4" rx="1.2"/><rect x="752.4" y="0" width="2.4" height="2.4" rx="1.2"/><rect x="765.6" y="0" width="2.4" height="2.4" rx="1.2"/><rect x="778.8" y="0" width="2.4" height="2.4" rx="1.2"/><rect x="792.0" y="0" width="2.4" height="2.4" rx="1.2"/><rect x="805.2" y="0" width="2.4" height="2.4" rx="1.2"/><rect x="818.4" y="0" width="2.4" height="2.4" rx="1.2"/><rect x="831.6" y="0" width="2.4" height="2.4" rx="1.2"/></g></svg>
<div class="cb" style="left:211px;top:788px"></div>
<svg class="abs" style="left:211px;top:827.3px" width="836" height="3"><g fill="#7c7c7c"><rect x="0.0" y="0" width="2.4" height="2.4" rx="1.2"/><rect x="13.2" y="0" width="2.4" height="2.4" rx="1.2"/><rect x="26.4" y="0" width="2.4" height="2.4" rx="1.2"/><rect x="39.6" y="0" width="2.4" height="2.4" rx="1.2"/><rect x="52.8" y="0" width="2.4" height="2.4" rx="1.2"/><rect x="66.0" y="0" width="2.4" height="2.4" rx="1.2"/><rect x="79.2" y="0" width="2.4" height="2.4" rx="1.2"/><rect x="92.4" y="0" width="2.4" height="2.4" rx="1.2"/><rect x="105.6" y="0" width="2.4" height="2.4" rx="1.2"/><rect x="118.8" y="0" width="2.4" height="2.4" rx="1.2"/><rect x="132.0" y="0" width="2.4" height="2.4" rx="1.2"/><rect x="145.2" y="0" width="2.4" height="2.4" rx="1.2"/><rect x="158.4" y="0" width="2.4" height="2.4" rx="1.2"/><rect x="171.6" y="0" width="2.4" height="2.4" rx="1.2"/><rect x="184.8" y="0" width="2.4" height="2.4" rx="1.2"/><rect x="198.0" y="0" width="2.4" height="2.4" rx="1.2"/><rect x="211.2" y="0" width="2.4" height="2.4" rx="1.2"/><rect x="224.4" y="0" width="2.4" height="2.4" rx="1.2"/><rect x="237.6" y="0" width="2.4" height="2.4" rx="1.2"/><rect x="250.8" y="0" width="2.4" height="2.4" rx="1.2"/><rect x="264.0" y="0" width="2.4" height="2.4" rx="1.2"/><rect x="277.2" y="0" width="2.4" height="2.4" rx="1.2"/><rect x="290.4" y="0" width="2.4" height="2.4" rx="1.2"/><rect x="303.6" y="0" width="2.4" height="2.4" rx="1.2"/><rect x="316.8" y="0" width="2.4" height="2.4" rx="1.2"/><rect x="330.0" y="0" width="2.4" height="2.4" rx="1.2"/><rect x="343.2" y="0" width="2.4" height="2.4" rx="1.2"/><rect x="356.4" y="0" width="2.4" height="2.4" rx="1.2"/><rect x="369.6" y="0" width="2.4" height="2.4" rx="1.2"/><rect x="382.8" y="0" width="2.4" height="2.4" rx="1.2"/><rect x="396.0" y="0" width="2.4" height="2.4" rx="1.2"/><rect x="409.2" y="0" width="2.4" height="2.4" rx="1.2"/><rect x="422.4" y="0" width="2.4" height="2.4" rx="1.2"/><rect x="435.6" y="0" width="2.4" height="2.4" rx="1.2"/><rect x="448.8" y="0" width="2.4" height="2.4" rx="1.2"/><rect x="462.0" y="0" width="2.4" height="2.4" rx="1.2"/><rect x="475.2" y="0" width="2.4" height="2.4" rx="1.2"/><rect x="488.4" y="0" width="2.4" height="2.4" rx="1.2"/><rect x="501.6" y="0" width="2.4" height="2.4" rx="1.2"/><rect x="514.8" y="0" width="2.4" height="2.4" rx="1.2"/><rect x="528.0" y="0" width="2.4" height="2.4" rx="1.2"/><rect x="541.2" y="0" width="2.4" height="2.4" rx="1.2"/><rect x="554.4" y="0" width="2.4" height="2.4" rx="1.2"/><rect x="567.6" y="0" width="2.4" height="2.4" rx="1.2"/><rect x="580.8" y="0" width="2.4" height="2.4" rx="1.2"/><rect x="594.0" y="0" width="2.4" height="2.4" rx="1.2"/><rect x="607.2" y="0" width="2.4" height="2.4" rx="1.2"/><rect x="620.4" y="0" width="2.4" height="2.4" rx="1.2"/><rect x="633.6" y="0" width="2.4" height="2.4" rx="1.2"/><rect x="646.8" y="0" width="2.4" height="2.4" rx="1.2"/><rect x="660.0" y="0" width="2.4" height="2.4" rx="1.2"/><rect x="673.2" y="0" width="2.4" height="2.4" rx="1.2"/><rect x="686.4" y="0" width="2.4" height="2.4" rx="1.2"/><rect x="699.6" y="0" width="2.4" height="2.4" rx="1.2"/><rect x="712.8" y="0" width="2.4" height="2.4" rx="1.2"/><rect x="726.0" y="0" width="2.4" height="2.4" rx="1.2"/><rect x="739.2" y="0" width="2.4" height="2.4" rx="1.2"/><rect x="752.4" y="0" width="2.4" height="2.4" rx="1.2"/><rect x="765.6" y="0" width="2.4" height="2.4" rx="1.2"/><rect x="778.8" y="0" width="2.4" height="2.4" rx="1.2"/><rect x="792.0" y="0" width="2.4" height="2.4" rx="1.2"/><rect x="805.2" y="0" width="2.4" height="2.4" rx="1.2"/><rect x="818.4" y="0" width="2.4" height="2.4" rx="1.2"/><rect x="831.6" y="0" width="2.4" height="2.4" rx="1.2"/></g></svg>
<div class="cb" style="left:211px;top:851px"></div>
<svg class="abs" style="left:211px;top:889.8px" width="836" height="3"><g fill="#7c7c7c"><rect x="0.0" y="0" width="2.4" height="2.4" rx="1.2"/><rect x="13.2" y="0" width="2.4" height="2.4" rx="1.2"/><rect x="26.4" y="0" width="2.4" height="2.4" rx="1.2"/><rect x="39.6" y="0" width="2.4" height="2.4" rx="1.2"/><rect x="52.8" y="0" width="2.4" height="2.4" rx="1.2"/><rect x="66.0" y="0" width="2.4" height="2.4" rx="1.2"/><rect x="79.2" y="0" width="2.4" height="2.4" rx="1.2"/><rect x="92.4" y="0" width="2.4" height="2.4" rx="1.2"/><rect x="105.6" y="0" width="2.4" height="2.4" rx="1.2"/><rect x="118.8" y="0" width="2.4" height="2.4" rx="1.2"/><rect x="132.0" y="0" width="2.4" height="2.4" rx="1.2"/><rect x="145.2" y="0" width="2.4" height="2.4" rx="1.2"/><rect x="158.4" y="0" width="2.4" height="2.4" rx="1.2"/><rect x="171.6" y="0" width="2.4" height="2.4" rx="1.2"/><rect x="184.8" y="0" width="2.4" height="2.4" rx="1.2"/><rect x="198.0" y="0" width="2.4" height="2.4" rx="1.2"/><rect x="211.2" y="0" width="2.4" height="2.4" rx="1.2"/><rect x="224.4" y="0" width="2.4" height="2.4" rx="1.2"/><rect x="237.6" y="0" width="2.4" height="2.4" rx="1.2"/><rect x="250.8" y="0" width="2.4" height="2.4" rx="1.2"/><rect x="264.0" y="0" width="2.4" height="2.4" rx="1.2"/><rect x="277.2" y="0" width="2.4" height="2.4" rx="1.2"/><rect x="290.4" y="0" width="2.4" height="2.4" rx="1.2"/><rect x="303.6" y="0" width="2.4" height="2.4" rx="1.2"/><rect x="316.8" y="0" width="2.4" height="2.4" rx="1.2"/><rect x="330.0" y="0" width="2.4" height="2.4" rx="1.2"/><rect x="343.2" y="0" width="2.4" height="2.4" rx="1.2"/><rect x="356.4" y="0" width="2.4" height="2.4" rx="1.2"/><rect x="369.6" y="0" width="2.4" height="2.4" rx="1.2"/><rect x="382.8" y="0" width="2.4" height="2.4" rx="1.2"/><rect x="396.0" y="0" width="2.4" height="2.4" rx="1.2"/><rect x="409.2" y="0" width="2.4" height="2.4" rx="1.2"/><rect x="422.4" y="0" width="2.4" height="2.4" rx="1.2"/><rect x="435.6" y="0" width="2.4" height="2.4" rx="1.2"/><rect x="448.8" y="0" width="2.4" height="2.4" rx="1.2"/><rect x="462.0" y="0" width="2.4" height="2.4" rx="1.2"/><rect x="475.2" y="0" width="2.4" height="2.4" rx="1.2"/><rect x="488.4" y="0" width="2.4" height="2.4" rx="1.2"/><rect x="501.6" y="0" width="2.4" height="2.4" rx="1.2"/><rect x="514.8" y="0" width="2.4" height="2.4" rx="1.2"/><rect x="528.0" y="0" width="2.4" height="2.4" rx="1.2"/><rect x="541.2" y="0" width="2.4" height="2.4" rx="1.2"/><rect x="554.4" y="0" width="2.4" height="2.4" rx="1.2"/><rect x="567.6" y="0" width="2.4" height="2.4" rx="1.2"/><rect x="580.8" y="0" width="2.4" height="2.4" rx="1.2"/><rect x="594.0" y="0" width="2.4" height="2.4" rx="1.2"/><rect x="607.2" y="0" width="2.4" height="2.4" rx="1.2"/><rect x="620.4" y="0" width="2.4" height="2.4" rx="1.2"/><rect x="633.6" y="0" width="2.4" height="2.4" rx="1.2"/><rect x="646.8" y="0" width="2.4" height="2.4" rx="1.2"/><rect x="660.0" y="0" width="2.4" height="2.4" rx="1.2"/><rect x="673.2" y="0" width="2.4" height="2.4" rx="1.2"/><rect x="686.4" y="0" width="2.4" height="2.4" rx="1.2"/><rect x="699.6" y="0" width="2.4" height="2.4" rx="1.2"/><rect x="712.8" y="0" width="2.4" height="2.4" rx="1.2"/><rect x="726.0" y="0" width="2.4" height="2.4" rx="1.2"/><rect x="739.2" y="0" width="2.4" height="2.4" rx="1.2"/><rect x="752.4" y="0" width="2.4" height="2.4" rx="1.2"/><rect x="765.6" y="0" width="2.4" height="2.4" rx="1.2"/><rect x="778.8" y="0" width="2.4" height="2.4" rx="1.2"/><rect x="792.0" y="0" width="2.4" height="2.4" rx="1.2"/><rect x="805.2" y="0" width="2.4" height="2.4" rx="1.2"/><rect x="818.4" y="0" width="2.4" height="2.4" rx="1.2"/><rect x="831.6" y="0" width="2.4" height="2.4" rx="1.2"/></g></svg>
<div class="cb" style="left:211px;top:906.5px"></div>
<svg class="abs" style="left:211px;top:945.5px" width="836" height="3"><g fill="#7c7c7c"><rect x="0.0" y="0" width="2.4" height="2.4" rx="1.2"/><rect x="13.2" y="0" width="2.4" height="2.4" rx="1.2"/><rect x="26.4" y="0" width="2.4" height="2.4" rx="1.2"/><rect x="39.6" y="0" width="2.4" height="2.4" rx="1.2"/><rect x="52.8" y="0" width="2.4" height="2.4" rx="1.2"/><rect x="66.0" y="0" width="2.4" height="2.4" rx="1.2"/><rect x="79.2" y="0" width="2.4" height="2.4" rx="1.2"/><rect x="92.4" y="0" width="2.4" height="2.4" rx="1.2"/><rect x="105.6" y="0" width="2.4" height="2.4" rx="1.2"/><rect x="118.8" y="0" width="2.4" height="2.4" rx="1.2"/><rect x="132.0" y="0" width="2.4" height="2.4" rx="1.2"/><rect x="145.2" y="0" width="2.4" height="2.4" rx="1.2"/><rect x="158.4" y="0" width="2.4" height="2.4" rx="1.2"/><rect x="171.6" y="0" width="2.4" height="2.4" rx="1.2"/><rect x="184.8" y="0" width="2.4" height="2.4" rx="1.2"/><rect x="198.0" y="0" width="2.4" height="2.4" rx="1.2"/><rect x="211.2" y="0" width="2.4" height="2.4" rx="1.2"/><rect x="224.4" y="0" width="2.4" height="2.4" rx="1.2"/><rect x="237.6" y="0" width="2.4" height="2.4" rx="1.2"/><rect x="250.8" y="0" width="2.4" height="2.4" rx="1.2"/><rect x="264.0" y="0" width="2.4" height="2.4" rx="1.2"/><rect x="277.2" y="0" width="2.4" height="2.4" rx="1.2"/><rect x="290.4" y="0" width="2.4" height="2.4" rx="1.2"/><rect x="303.6" y="0" width="2.4" height="2.4" rx="1.2"/><rect x="316.8" y="0" width="2.4" height="2.4" rx="1.2"/><rect x="330.0" y="0" width="2.4" height="2.4" rx="1.2"/><rect x="343.2" y="0" width="2.4" height="2.4" rx="1.2"/><rect x="356.4" y="0" width="2.4" height="2.4" rx="1.2"/><rect x="369.6" y="0" width="2.4" height="2.4" rx="1.2"/><rect x="382.8" y="0" width="2.4" height="2.4" rx="1.2"/><rect x="396.0" y="0" width="2.4" height="2.4" rx="1.2"/><rect x="409.2" y="0" width="2.4" height="2.4" rx="1.2"/><rect x="422.4" y="0" width="2.4" height="2.4" rx="1.2"/><rect x="435.6" y="0" width="2.4" height="2.4" rx="1.2"/><rect x="448.8" y="0" width="2.4" height="2.4" rx="1.2"/><rect x="462.0" y="0" width="2.4" height="2.4" rx="1.2"/><rect x="475.2" y="0" width="2.4" height="2.4" rx="1.2"/><rect x="488.4" y="0" width="2.4" height="2.4" rx="1.2"/><rect x="501.6" y="0" width="2.4" height="2.4" rx="1.2"/><rect x="514.8" y="0" width="2.4" height="2.4" rx="1.2"/><rect x="528.0" y="0" width="2.4" height="2.4" rx="1.2"/><rect x="541.2" y="0" width="2.4" height="2.4" rx="1.2"/><rect x="554.4" y="0" width="2.4" height="2.4" rx="1.2"/><rect x="567.6" y="0" width="2.4" height="2.4" rx="1.2"/><rect x="580.8" y="0" width="2.4" height="2.4" rx="1.2"/><rect x="594.0" y="0" width="2.4" height="2.4" rx="1.2"/><rect x="607.2" y="0" width="2.4" height="2.4" rx="1.2"/><rect x="620.4" y="0" width="2.4" height="2.4" rx="1.2"/><rect x="633.6" y="0" width="2.4" height="2.4" rx="1.2"/><rect x="646.8" y="0" width="2.4" height="2.4" rx="1.2"/><rect x="660.0" y="0" width="2.4" height="2.4" rx="1.2"/><rect x="673.2" y="0" width="2.4" height="2.4" rx="1.2"/><rect x="686.4" y="0" width="2.4" height="2.4" rx="1.2"/><rect x="699.6" y="0" width="2.4" height="2.4" rx="1.2"/><rect x="712.8" y="0" width="2.4" height="2.4" rx="1.2"/><rect x="726.0" y="0" width="2.4" height="2.4" rx="1.2"/><rect x="739.2" y="0" width="2.4" height="2.4" rx="1.2"/><rect x="752.4" y="0" width="2.4" height="2.4" rx="1.2"/><rect x="765.6" y="0" width="2.4" height="2.4" rx="1.2"/><rect x="778.8" y="0" width="2.4" height="2.4" rx="1.2"/><rect x="792.0" y="0" width="2.4" height="2.4" rx="1.2"/><rect x="805.2" y="0" width="2.4" height="2.4" rx="1.2"/><rect x="818.4" y="0" width="2.4" height="2.4" rx="1.2"/><rect x="831.6" y="0" width="2.4" height="2.4" rx="1.2"/></g></svg>
<div class="abs" id="toolgap"></div><div class="abs" id="toolbar"></div><div class="abs" id="toolhead"></div>
<div class="abs" style="left:0;top:70px;width:38px;height:1px;background:#3c3c3c;"></div>
<div class="abs" style="left:0;top:59px;width:1px;height:936px;background:#3e3e3e;"></div>
<svg class="abs" style="left:0;top:0" width="40" height="995" viewBox="0 0 40 995"><path d="M5 62 L7.3 64.3 L5 66.6 M8.6 62 L10.9 64.3 L8.6 66.6" fill="none" stroke="#e0e0e0" stroke-width="1.1"/><g fill="#454545"><rect x="10" y="75" width="1" height="3"/><rect x="12" y="75" width="1" height="3"/><rect x="14" y="75" width="1" height="3"/><rect x="16" y="75" width="1" height="3"/><rect x="18" y="75" width="1" height="3"/><rect x="20" y="75" width="1" height="3"/><rect x="22" y="75" width="1" height="3"/><rect x="24" y="75" width="1" height="3"/><rect x="26" y="75" width="1" height="3"/><rect x="28" y="75" width="1" height="3"/></g><path d="M32.2 105.5 V108.9 H28.8 Z" fill="#a6a6a6"/><path d="M32.2 131.5 V134.9 H28.8 Z" fill="#a6a6a6"/><path d="M32.2 157.5 V160.9 H28.8 Z" fill="#a6a6a6"/><path d="M32.2 183.5 V186.9 H28.8 Z" fill="#a6a6a6"/><path d="M32.2 209.5 V212.9 H28.8 Z" fill="#a6a6a6"/><path d="M32.2 261.5 V264.9 H28.8 Z" fill="#a6a6a6"/><path d="M32.2 287.5 V290.9 H28.8 Z" fill="#a6a6a6"/><path d="M32.2 313.5 V316.9 H28.8 Z" fill="#a6a6a6"/><path d="M32.2 339.5 V342.9 H28.8 Z" fill="#a6a6a6"/><path d="M32.2 365.5 V368.9 H28.8 Z" fill="#a6a6a6"/><path d="M32.2 391.5 V394.9 H28.8 Z" fill="#a6a6a6"/><path d="M32.2 417.5 V420.9 H28.8 Z" fill="#a6a6a6"/><path d="M32.2 443.5 V446.9 H28.8 Z" fill="#a6a6a6"/><path d="M32.2 469.5 V472.9 H28.8 Z" fill="#a6a6a6"/><path d="M32.2 495.5 V498.9 H28.8 Z" fill="#a6a6a6"/><path d="M32.2 521.5 V524.9 H28.8 Z" fill="#a6a6a6"/><path d="M32.2 547.5 V550.9 H28.8 Z" fill="#a6a6a6"/><path d="M32.2 573.5 V576.9 H28.8 Z" fill="#a6a6a6"/><path d="M32.2 651.5 V654.9 H28.8 Z" fill="#a6a6a6"/><g fill="#dcdcdc" stroke="none"><rect x="18.65" y="95.5" width="1.5" height="10"/><rect x="14.4" y="99.75" width="10" height="1.5"/><path d="M19.4 92.8 L22.1 96.3 H16.7 Z M19.4 108.2 L22.1 104.7 H16.7 Z M11.7 100.5 L15.2 97.8 V103.2 Z M27.1 100.5 L23.6 97.8 V103.2 Z"/></g><path d="M12.6 122.1 V119.5 H15.2 M18.0 119.5 H22.1 M24.9 119.5 H27.5 V122.1 M27.5 123.9 V127.0 M27.5 128.8 V131.4 H24.9 M22.1 131.4 H18.0 M15.2 131.4 H12.6 V128.8 M12.6 127.0 V123.9" fill="none" stroke="#dcdcdc" stroke-width="1.4"/><g fill="none" stroke="#dcdcdc" stroke-width="1.2"><ellipse cx="21" cy="151.6" rx="8" ry="5.6" transform="rotate(-14 21 151.6)"/><circle cx="15.1" cy="156" r="1.7"/><path d="M16.2 157.2 C17.6 158 17.4 159.6 16.4 160.6"/></g><g fill="#dcdcdc"><rect x="13" y="170" width="1.1" height="1.1"/><rect x="13" y="172" width="1.1" height="1.1"/><rect x="13" y="174" width="1.1" height="1.1"/><rect x="13" y="176" width="1.1" height="1.1"/><rect x="13" y="178" width="1.1" height="1.1"/><rect x="13" y="180" width="1.1" height="1.1"/><rect x="13" y="182" width="1.1" height="1.1"/><rect x="15" y="170" width="1.1" height="1.1"/><rect x="15" y="182" width="1.1" height="1.1"/><rect x="17" y="170" width="1.1" height="1.1"/><rect x="17" y="182" width="1.1" height="1.1"/><rect x="19" y="170" width="1.1" height="1.1"/><rect x="19" y="182" width="1.1" height="1.1"/><rect x="21" y="170" width="1.1" height="1.1"/><rect x="21" y="182" width="1.1" height="1.1"/><rect x="23" y="170" width="1.1" height="1.1"/><rect x="23" y="182" width="1.1" height="1.1"/><rect x="25" y="170" width="1.1" height="1.1"/><rect x="25" y="172" width="1.1" height="1.1"/><rect x="25" y="174" width="1.1" height="1.1"/><rect x="25" y="176" width="1.1" height="1.1"/><rect x="25" y="178" width="1.1" height="1.1"/><rect x="25" y="180" width="1.1" height="1.1"/><rect x="25" y="182" width="1.1" height="1.1"/></g><rect x="16" y="172.8" width="7.3" height="7" fill="#dcdcdc"/><path d="M21.7 178 V187.6 L24.4 185 L29.2 184.2 Z" fill="#dcdcdc" stroke="#535353" stroke-width="1.2" paint-order="stroke"/><g fill="#dcdcdc"><rect x="14.3" y="194.9" width="2.1" height="13.9"/><rect x="14.3" y="207" width="7.4" height="1.8"/><rect x="9.8" y="198.1" width="3.1" height="1.8"/><rect x="17.6" y="198.1" width="7.7" height="1.8"/><rect x="23.3" y="198.1" width="2" height="13.9"/><rect x="26.4" y="207" width="2.6" height="1.8"/></g><g stroke="#dcdcdc" stroke-width="1" fill="#646464"><rect x="13.3" y="224.1" width="14.8" height="11.6"/><path d="M13.3 224.1 L28.1 235.7 M28.1 224.1 L13.3 235.7" fill="none" stroke-width="0.9"/></g><g fill="#dcdcdc"><circle cx="13.3" cy="224.1" r="1.25"/><circle cx="13.3" cy="235.7" r="1.25"/><circle cx="28.1" cy="224.1" r="1.25"/><circle cx="28.1" cy="235.7" r="1.25"/></g><g transform="translate(12.9 263.3) rotate(45)"><path d="M-1.7 -1.7 V-11.5 H1.7 V-1.7 A1.7 1.7 0 0 1 -1.7 -1.7 Z" fill="none" stroke="#dcdcdc" stroke-width="1.2"/><rect x="-4.2" y="-14.2" width="8.4" height="2.7" fill="#dcdcdc"/><rect x="-2.6" y="-20.2" width="5.2" height="7.4" rx="2.6" fill="#dcdcdc"/><rect x="-2.3" y="-12" width="4.6" height="1.6" fill="#dcdcdc"/></g><g fill="#dcdcdc"><circle cx="19.53" cy="278.65" r="0.88"/><circle cx="18.59" cy="280.66" r="0.88"/><circle cx="16.77" cy="281.94" r="0.88"/><circle cx="14.55" cy="282.13" r="0.88"/><circle cx="12.54" cy="281.19" r="0.88"/><circle cx="11.26" cy="279.37" r="0.88"/><circle cx="11.07" cy="277.15" r="0.88"/><circle cx="12.01" cy="275.14" r="0.88"/><circle cx="13.83" cy="273.86" r="0.88"/><circle cx="16.05" cy="273.67" r="0.88"/><circle cx="18.06" cy="274.61" r="0.88"/><circle cx="19.34" cy="276.43" r="0.88"/></g><g transform="translate(20.2 282) rotate(-48)"><rect x="-10.2" y="-3.7" width="20.4" height="7.4" rx="1.2" fill="#dcdcdc" stroke="#535353" stroke-width="1.4" paint-order="stroke"/><rect x="-5" y="-3.9" width="0.9" height="7.8" fill="#535353"/><rect x="4.1" y="-3.9" width="0.9" height="7.8" fill="#535353"/><g fill="#535353"><circle cx="-1.6" cy="-1.6" r="1.05"/><circle cx="1.6" cy="-1.6" r="1.05"/><circle cx="-1.6" cy="1.6" r="1.05"/><circle cx="1.6" cy="1.6" r="1.05"/></g></g><g fill="#dcdcdc"><path d="M27.2 300.5 L26.2 304 L20.6 310.4 L18.8 308.7 L24.4 302.3 Z"/><path d="M18.2 309.4 L20 311.1 C20.6 313.6 18 316.2 12 316 C14.2 314.6 13.2 312.6 14.6 310.6 C15.6 309.3 17 309 18.2 309.4 Z"/></g><g fill="#dcdcdc"><circle cx="20.5" cy="330.3" r="3.5"/><path d="M19 332.5 H22 L22.6 336.8 H18.4 Z"/><path d="M13.9 340 V337.6 Q13.9 336.4 15.1 336.4 H25.9 Q27.1 336.4 27.1 337.6 V340 Z"/><rect x="14.6" y="341" width="11.8" height="1.2"/></g><g fill="#dcdcdc"><path d="M28 352.6 L27.2 355.8 L22.3 361.8 L20.8 360.4 L25.6 354.2 Z"/><path d="M20.2 361 L21.8 362.5 C22.3 365 19.6 367.8 13.2 368 C15.4 366.4 14.8 364.4 16.2 362.4 C17.2 361 18.8 360.6 20.2 361 Z"/><path d="M10.8 359 L15.2 355.2 L16.6 359.2 Z"/></g><path d="M15.4 357.2 C16.6 355.4 19 355 22 355.4" fill="none" stroke="#dcdcdc" stroke-width="1.2"/><g fill="#dcdcdc"><circle cx="26.2" cy="359.2" r="0.72"/><circle cx="26.4" cy="361.2" r="0.72"/><circle cx="25.8" cy="363.1" r="0.72"/><circle cx="24.6" cy="364.7" r="0.72"/><circle cx="23.2" cy="365.8" r="0.72"/></g><path d="M23.4 379.6 L28 384.2 L22.4 389.4 L17.8 384.8 Z" fill="#dcdcdc" stroke="#dcdcdc" stroke-width="0.8" stroke-linejoin="round"/><path d="M17.8 384.8 L13.4 388.8 L17.4 392.6 L22.4 389.4 M16.0 392.6 H28" fill="none" stroke="#dcdcdc" stroke-width="1.1" stroke-linejoin="round"/><rect x="12.4" y="405.6" width="15.2" height="11.8" fill="url(#tg)" stroke="#e4e4e4" stroke-width="1"/><path d="M19.6 429.8 C20.4 433 25 436.4 25 440.2 A5.1 5.1 0 0 1 14.8 440.2 C14.8 436.4 18.8 433 19.6 429.8 Z" fill="#dcdcdc"/><circle cx="21.7" cy="462" r="5.2" fill="#dcdcdc"/><path d="M18.4 465.6 L12.4 471.6" stroke="#dcdcdc" stroke-width="1.5" fill="none"/><path d="M13.3 497.4 L15.6 488 L20.6 484.4 L27 490.6 L23.8 495.2 Z" fill="none" stroke="#dcdcdc" stroke-width="1.2" stroke-linejoin="round"/><path d="M20.4 484 L23.7 482.6 L28.3 487.2 L27.2 490.6 Z" fill="#dcdcdc" stroke="#dcdcdc" stroke-width="0.8" stroke-linejoin="round"/><path d="M13.6 497 L19.4 491.2" stroke="#dcdcdc" stroke-width="1" fill="none"/><circle cx="19.8" cy="490.8" r="1.2" fill="#dcdcdc"/><path d="M16.3 535 V547.2 L19.2 544.6 L21.9 550 L23.8 549.1 L21.3 543.8 L25.6 543.4 Z" fill="#0e0e0e" stroke="#e4e4e4" stroke-width="1.1" stroke-linejoin="miter"/><rect x="12.4" y="561.6" width="15.2" height="11.8" fill="#6e6e6e" stroke="#e0e0e0" stroke-width="1"/><rect x="4" y="581.6" width="31" height="24.8" rx="3.2" fill="#383838" stroke="#5c5c5c" stroke-width="0.9"/><path d="M32.2 599.5 V602.9 H28.8 Z" fill="#a6a6a6"/><g transform="translate(11.9 585.7)"><g fill="none" stroke="#dcdcdc" stroke-width="1.9" stroke-linecap="round"><path d="M5.5 2.9 V10 M8.9 1 V10 M12.2 2.3 V10 M15.3 5.6 L14.2 11.5"/></g><path d="M4.55 8.9 H13.2 L15.3 10.8 C15.5 14.6 13.6 17 9.4 17 C6.4 17 4.9 15.6 3.5 13.5 L0.3 8.9 C-0.3 7.9 0.9 6.9 1.9 7.7 L4.55 10.4 Z" fill="#dcdcdc"/></g><circle cx="18.1" cy="617.9" r="5.6" fill="none" stroke="#dcdcdc" stroke-width="1.3"/><path d="M22.4 622.2 L27.4 627.2" stroke="#dcdcdc" stroke-width="2" stroke-linecap="round"/><path d="M18.4 614.6 A3.4 3.4 0 0 1 21.4 617" fill="none" stroke="#dcdcdc" stroke-width="0.9"/><g fill="#dcdcdc"><circle cx="13.8" cy="646" r="2.1"/><circle cx="19.9" cy="646" r="2.1"/><circle cx="25.9" cy="646" r="2.1"/></g><rect x="8.3" y="668.3" width="6.8" height="6.8" fill="#e4e4e4"/><rect x="5.5" y="665.5" width="6" height="6" fill="#111" stroke="#e4e4e4" stroke-width="1"/><path d="M24 667.6 H29.6 V672.4" fill="none" stroke="#dcdcdc" stroke-width="1.3"/><path d="M21.7 667.6 L25.2 664.9 V670.3 Z M29.6 675.4 L26.9 671.9 H32.3 Z" fill="#dcdcdc"/><rect x="14.5" y="690.5" width="19" height="18.6" fill="#ffffff" stroke="#3a3a3a" stroke-width="1"/><rect x="4.5" y="680.3" width="19" height="18.6" fill="#ffffff" stroke="#3a3a3a" stroke-width="1"/><rect x="6.3" y="682.1" width="15.4" height="15" fill="#000"/><rect x="11.4" y="721.4" width="16.2" height="12.2" fill="#4c4c4c" stroke="#dcdcdc" stroke-width="1.1"/><g fill="#dcdcdc"><circle cx="23.56" cy="728.59" r="0.6"/><circle cx="22.47" cy="730.47" r="0.6"/><circle cx="20.59" cy="731.56" r="0.6"/><circle cx="18.41" cy="731.56" r="0.6"/><circle cx="16.53" cy="730.47" r="0.6"/><circle cx="15.44" cy="728.59" r="0.6"/><circle cx="15.44" cy="726.41" r="0.6"/><circle cx="16.53" cy="724.53" r="0.6"/><circle cx="18.41" cy="723.44" r="0.6"/><circle cx="20.59" cy="723.44" r="0.6"/><circle cx="22.47" cy="724.53" r="0.6"/><circle cx="23.56" cy="726.41" r="0.6"/></g><rect x="11.4" y="750.6" width="11" height="8.8" fill="#535353" stroke="#dcdcdc" stroke-width="1.1"/><rect x="10.9" y="750" width="12" height="2" fill="#dcdcdc"/><rect x="16.6" y="747.5" width="11" height="8.8" fill="#535353" stroke="#dcdcdc" stroke-width="1.1"/><rect x="16.1" y="747" width="12" height="2" fill="#dcdcdc"/><path d="M32.2 759.4 V762.8 H28.8 Z" fill="#a6a6a6"/><defs><linearGradient id="tg" x1="0" y1="0" x2="1" y2="0"><stop offset="0" stop-color="#151515"/><stop offset="1" stop-color="#e0e0e0"/></linearGradient></defs></svg>
<div class="abs" style="left:13px;top:504.3px;width:16px;text-align:center;font-family:'Liberation Serif',serif;font-weight:bold;font-size:21px;line-height:24px;color:#dcdcdc;transform:scaleX(0.9);will-change:transform;">T</div>
</body></html>
